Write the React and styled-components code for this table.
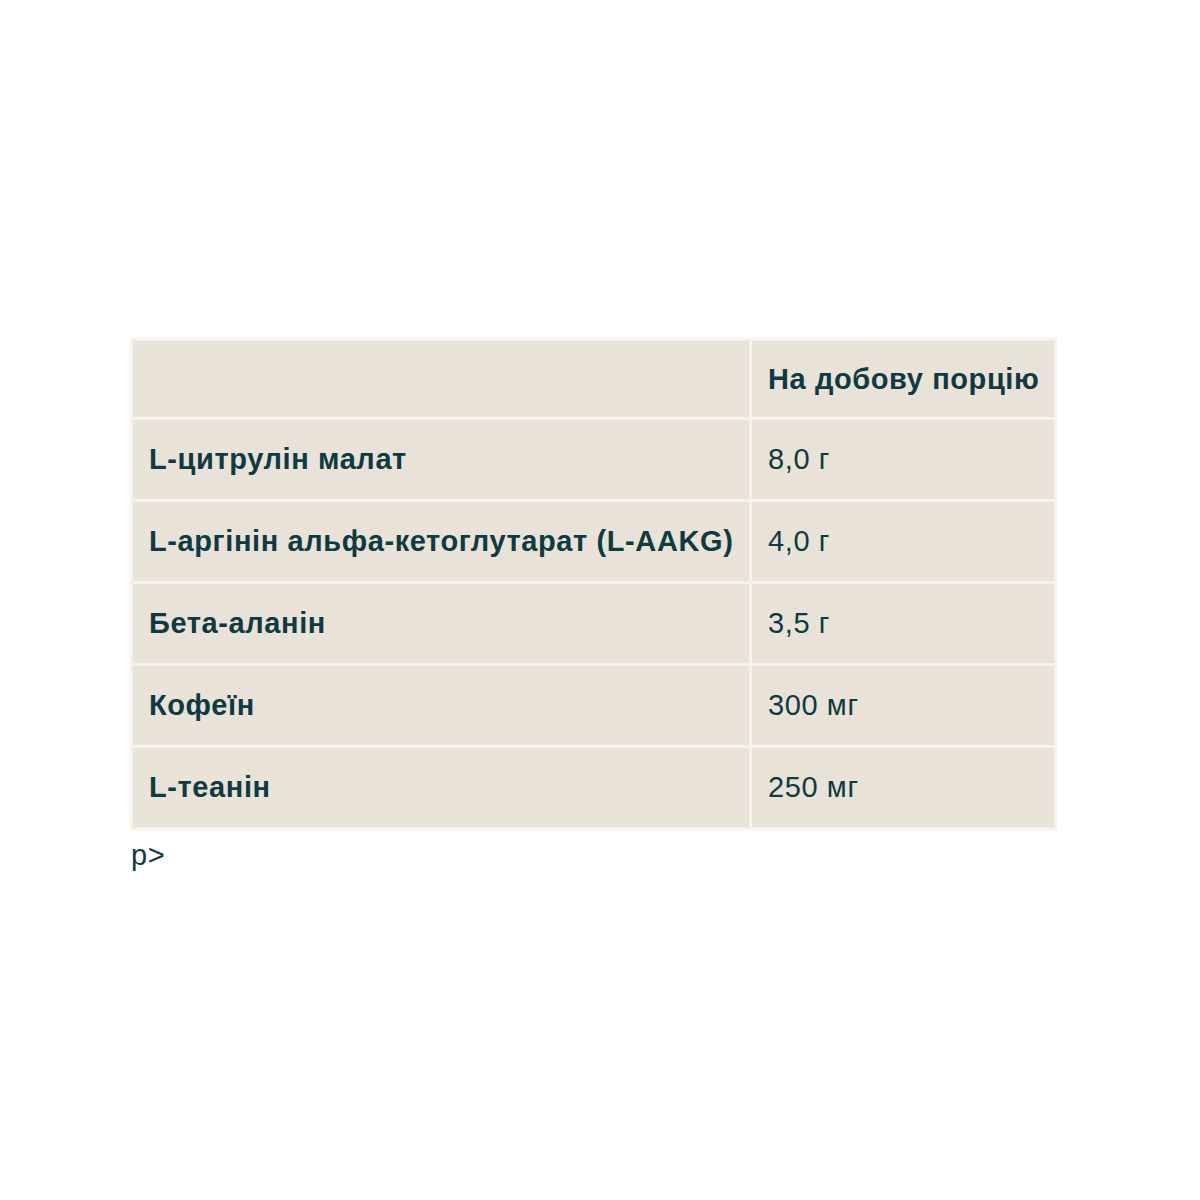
import React from "react";
import styled, { createGlobalStyle } from "styled-components";

const Global = createGlobalStyle`
  html, body { margin: 0; padding: 0; background: #ffffff; }
  body { font-family: "Liberation Sans", Arial, sans-serif; color: #0e3b3f; }
`;

const Page = styled.div`
  padding: 338px 0 0 130px;
`;

const Table = styled.table`
  width: 927px;
  border-collapse: separate;
  border-spacing: 3px;
  background: #f5f1eb;
  table-layout: fixed;
`;

const Cell = styled.td`
  background: #e9e2d8;
  padding: 0 16px;
  height: ${(p) => (p.$head ? 76 : 79)}px;
  font-size: 29px;
  letter-spacing: 0.6px;
  font-weight: ${(p) => (p.$bold ? 700 : 400)};
  color: #0e3b3f;
  white-space: nowrap;
  vertical-align: middle;
  line-height: 1.2;
`;

const Trailing = styled.p`
  margin: 8px 0 0 1px;
  font-size: 29px;
  letter-spacing: 0.6px;
  line-height: 1.2;
  color: #0e3b3f;
`;

const rows = [
  ["L-цитрулін малат", "8,0 г"],
  ["L-аргінін альфа-кетоглутарат (L-AAKG)", "4,0 г"],
  ["Бета-аланін", "3,5 г"],
  ["Кофеїн", "300 мг"],
  ["L-теанін", "250 мг"],
];

export default function App() {
  return (
    <>
      <Global />
      <Page>
        <Table>
          <colgroup>
            <col style={{ width: "616px" }} />
            <col style={{ width: "302px" }} />
          </colgroup>
          <tbody>
            <tr>
              <Cell $head />
              <Cell $head $bold>На добову порцію</Cell>
            </tr>
            {rows.map(([name, value]) => (
              <tr key={name}>
                <Cell $bold>{name}</Cell>
                <Cell>{value}</Cell>
              </tr>
            ))}
          </tbody>
        </Table>
        <Trailing>p&gt;</Trailing>
      </Page>
    </>
  );
}
